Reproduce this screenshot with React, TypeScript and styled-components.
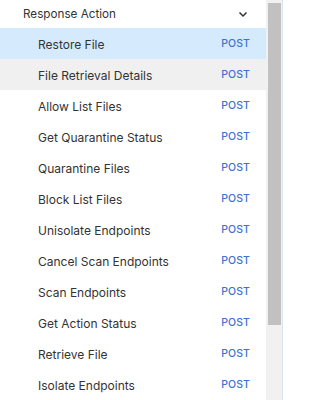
import styled, { createGlobalStyle } from 'styled-components';

const GlobalStyle = createGlobalStyle`
  html, body {
    margin: 0;
    padding: 0;
    background: #ffffff;
  }
  body {
    font-family: Inter, "Noto Sans", "Liberation Sans", sans-serif;
  }
`;

const Sidebar = styled.div`
  width: 282px;
  height: 400px;
  display: flex;
  border-right: 1px solid #dbe5f0;
  overflow: hidden;
`;

const List = styled.div`
  width: 266px;
  flex-shrink: 0;
  display: flex;
  flex-direction: column;
`;

const ScrollTrack = styled.div`
  width: 16px;
  flex-shrink: 0;
  background: #f1f1f1;
  padding: 3px 1px 0 2px;
  box-sizing: border-box;
`;

const ScrollThumb = styled.div`
  height: 322px;
  background: #c1c1c1;
`;

const GroupHeader = styled.div`
  height: 29px;
  display: flex;
  align-items: center;
  justify-content: space-between;
  padding: 0 17px 1px 23px;
  box-sizing: border-box;
  font-size: 11.7px;
  color: #333333;
`;

const Chevron = styled.svg`
  width: 12px;
  height: 12px;
`;

const Row = styled.div<{ $state?: 'active' | 'hover' }>`
  height: 31px;
  flex-shrink: 0;
  box-sizing: border-box;
  display: flex;
  align-items: center;
  justify-content: space-between;
  padding: 1px 16px 0 38px;
  font-size: 12px;
  color: #333333;
  background: ${(p) =>
    p.$state === 'active' ? '#d5ebfd' : p.$state === 'hover' ? '#f0f0f0' : 'transparent'};
`;

const Method = styled.span`
  font-size: 10.5px;
  font-weight: 500;
  color: #3d72cf;
  letter-spacing: 0.1px;
  margin-top: -2px;
`;

const items = [
  'Restore File',
  'File Retrieval Details',
  'Allow List Files',
  'Get Quarantine Status',
  'Quarantine Files',
  'Block List Files',
  'Unisolate Endpoints',
  'Cancel Scan Endpoints',
  'Scan Endpoints',
  'Get Action Status',
  'Retrieve File',
  'Isolate Endpoints',
];

const App = () => {
  return (
    <>
      <GlobalStyle />
      <Sidebar>
        <List>
          <GroupHeader>
            Response Action
            <Chevron viewBox="0 0 12 12" fill="none">
              <path d="M2.5 4.5 L6 8 L9.5 4.5" stroke="#333" strokeWidth="1.5" />
            </Chevron>
          </GroupHeader>
          {items.map((name, i) => (
            <Row key={name} $state={i === 0 ? 'active' : i === 1 ? 'hover' : undefined}>
              {name}
              <Method>POST</Method>
            </Row>
          ))}
        </List>
        <ScrollTrack>
          <ScrollThumb />
        </ScrollTrack>
      </Sidebar>
    </>
  );
};

export default App;
